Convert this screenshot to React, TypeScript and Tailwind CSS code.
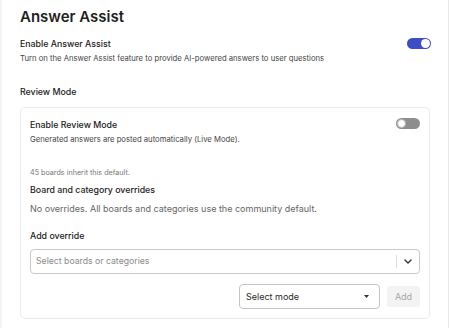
import React from 'react';

const Toggle: React.FC<{ on?: boolean }> = ({ on = false }) => {
  return (
    <div
      className={
        on
          ? 'w-[24px] h-[11px] rounded-full bg-[#3c4ec6] flex items-center justify-end px-[1px] shrink-0'
          : 'w-[24px] h-[11px] rounded-full bg-[#8e8e8e] flex items-center justify-start px-[1px] shrink-0'
      }
    >
      <div className={on ? 'w-[9px] h-[9px] rounded-full bg-white' : 'w-[9px] h-[9px] rounded-full bg-white border border-[#b5b5b5]'} />
    </div>
  );
};

export default function App() {
  return (
    <div
      className="w-[450px] h-[328px] bg-white flex overflow-hidden"
      style={{ fontFamily: 'Inter, "Noto Sans", sans-serif' }}
    >
      <div className="w-[2px] bg-[#f3f3f3] shrink-0" />
      <div className="w-[447px] shrink-0 border-r border-[#e8e8e8] pl-[18px] pr-[18px]">
        <h1 className="pt-[7px] text-[15px] leading-[20px] font-semibold text-[#1f1f1f]">Answer Assist</h1>

        <div className="mt-[11px] flex items-start justify-between">
          <div>
            <div className="text-[8.8px] leading-[12px] font-medium text-[#222]">Enable Answer Assist</div>
            <div className="mt-[3px] text-[7.7px] leading-[11px] text-[#444]">
              Turn on the Answer Assist feature to provide AI-powered answers to user questions
            </div>
          </div>
          <div className="mr-[-1px]">
            <Toggle on />
          </div>
        </div>

        <div className="mt-[22px] text-[8.8px] leading-[12px] font-medium text-[#222]">Review Mode</div>

        <div className="mt-[9px] border border-[#ebebeb] rounded-[5px] px-[9px] pt-[11px] pb-[9px]">
          <div className="flex items-start justify-between">
            <div>
              <div className="text-[8.8px] leading-[12px] font-medium text-[#222]">Enable Review Mode</div>
              <div className="mt-[3px] text-[7.7px] leading-[11px] text-[#444]">
                Generated answers are posted automatically (Live Mode).
              </div>
            </div>
            <div className="-mt-[1px]">
              <Toggle />
            </div>
          </div>

          <div className="mt-[22px] text-[7.2px] leading-[11px] text-[#777]">45 boards inherit this default.</div>

          <div className="mt-[6px] text-[8.8px] leading-[12px] font-medium text-[#222]">
            Board and category overrides
          </div>
          <div className="mt-[7px] text-[9px] leading-[12px] text-[#666]">
            No overrides. All boards and categories use the community default.
          </div>

          <div className="mt-[15px] text-[8.8px] leading-[12px] font-medium text-[#222]">Add override</div>

          <div className="mt-[7px] h-[25px] border border-[#c9c9c9] rounded-[4px] flex items-center">
            <div className="flex-1 pl-[5px] text-[8.7px] text-[#8a8a8a]">Select boards or categories</div>
            <div className="w-px h-[13px] bg-[#dcdcdc]" />
            <div className="w-[22px] flex items-center justify-center">
              <svg width="8" height="5" viewBox="0 0 8 5" fill="none">
                <path d="M1 1l3 3 3-3" stroke="#333" strokeWidth="1.4" strokeLinecap="round" strokeLinejoin="round" />
              </svg>
            </div>
          </div>

          <div className="mt-[10px] flex items-center justify-end gap-[7px]">
            <div className="w-[141px] h-[25px] border border-[#c4c4c4] rounded-[4px] flex items-center justify-between pl-[6px] pr-[10px]">
              <span className="text-[9px] text-[#2a2a2a]">Select mode</span>
              <svg width="5" height="3" viewBox="0 0 5 3">
                <path d="M0 0h5L2.5 3z" fill="#333" />
              </svg>
            </div>
            <div className="w-[33px] h-[21px] rounded-[3px] bg-[#f3f3f3] flex items-center justify-center text-[9px] text-[#a6a6a6]">
              Add
            </div>
          </div>
        </div>
      </div>
    </div>
  );
}
